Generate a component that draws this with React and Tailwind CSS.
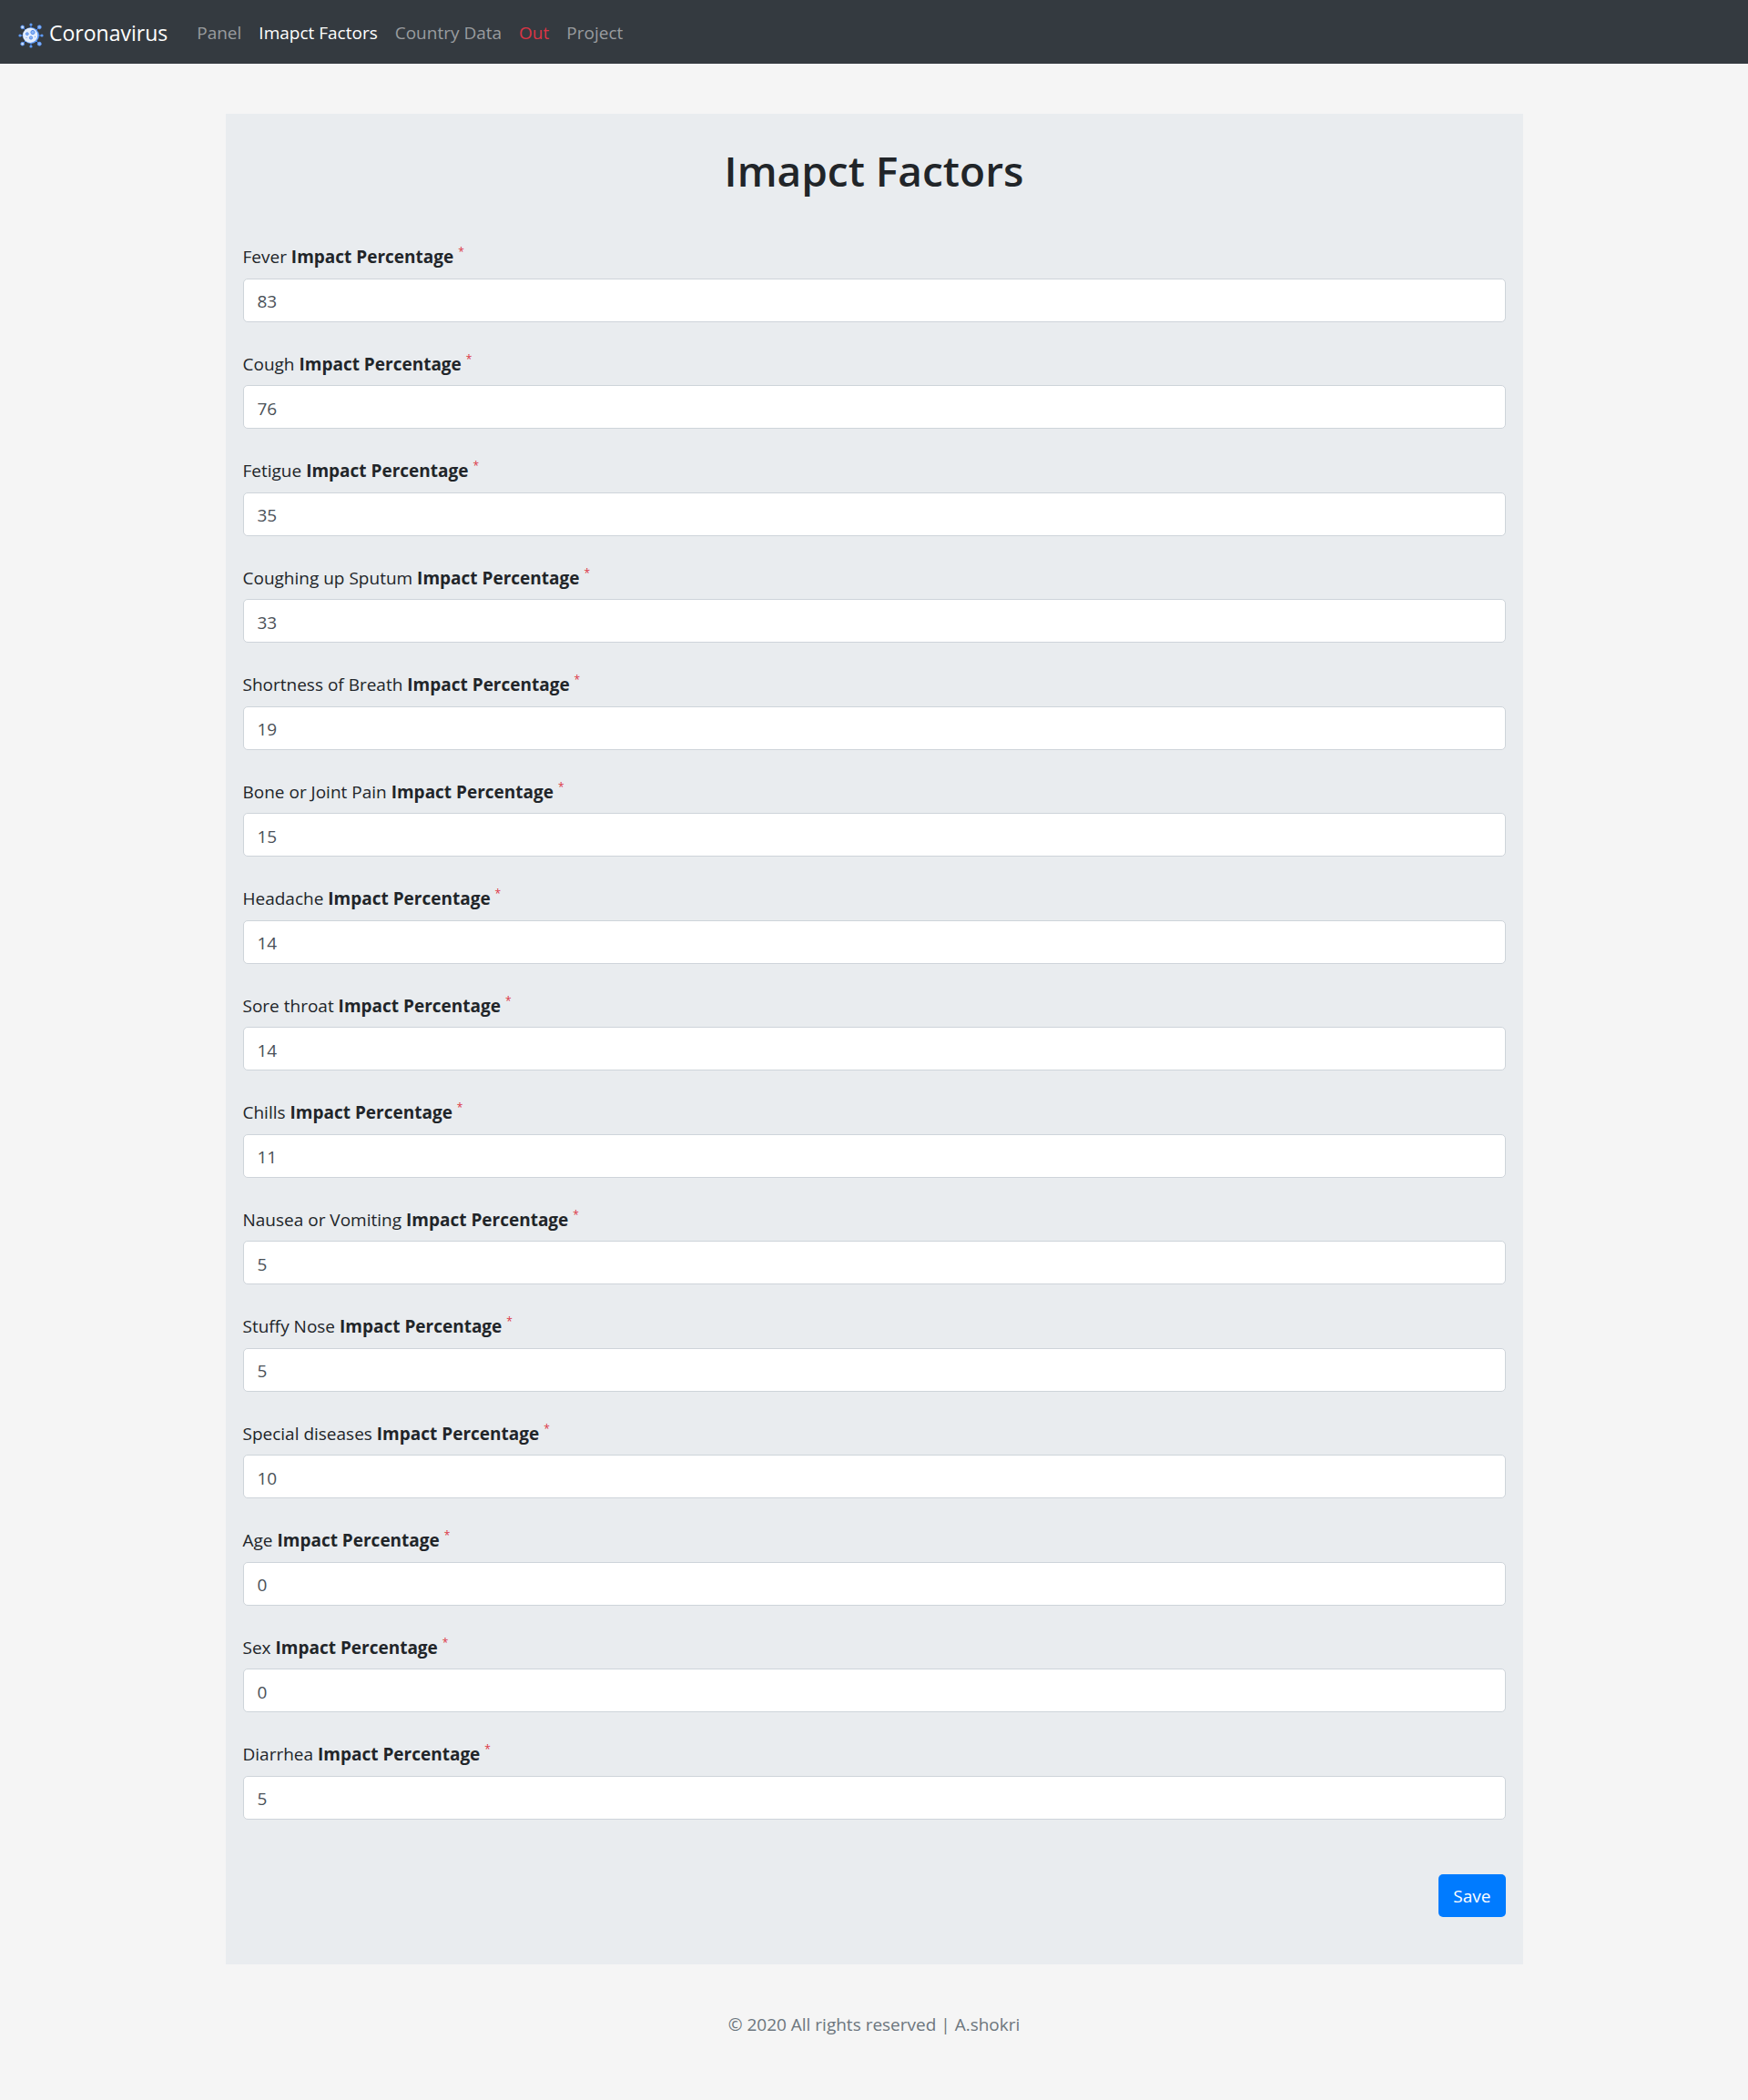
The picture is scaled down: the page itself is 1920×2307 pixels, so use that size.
import React from "react";

const FACTORS = [
  ["fever", "Fever", 83],
  ["cough", "Cough", 76],
  ["fatigue", "Fetigue", 35],
  ["sputum", "Coughing up Sputum", 33],
  ["breath", "Shortness of Breath", 19],
  ["pain", "Bone or Joint Pain", 15],
  ["headache", "Headache", 14],
  ["throat", "Sore throat", 14],
  ["chills", "Chills", 11],
  ["nausea", "Nausea or Vomiting", 5],
  ["nose", "Stuffy Nose", 5],
  ["special", "Special diseases", 10],
  ["age", "Age", 0],
  ["sex", "Sex", 0],
  ["diarrhea", "Diarrhea", 5],
];

const LINKS = [
  ["Panel", "text-[#999c9f]"],
  ["Imapct Factors", "text-white"],
  ["Country Data", "text-[#999c9f]"],
  ["Out", "text-[#dc3545]"],
  ["Project", "text-[#999c9f]"],
];

function VirusLogo() {
  return (
    <svg viewBox="0 0 28 28" className="mt-1 size-7 shrink-0" aria-hidden="true">
      <path d="M14 2v24M2 14h24M5 5l18 18M23 5L5 23" stroke="#3f7be6" strokeWidth="1" />
      <g fill="#5f9bf7">
        <circle cx="14" cy="2" r="1.6" />
        <circle cx="14" cy="26" r="1.6" />
        <circle cx="2" cy="14" r="1.6" />
        <circle cx="26" cy="14" r="1.6" />
      </g>
      <circle cx="4.7" cy="4.8" r="1.9" fill="#c3dafd" stroke="#4d8af0" strokeWidth="0.8" />
      <circle cx="4.7" cy="23.2" r="1.9" fill="#c3dafd" stroke="#4d8af0" strokeWidth="0.8" />
      <circle cx="23.3" cy="4.8" r="2.1" fill="#82b3fb" stroke="#4d8af0" strokeWidth="0.6" />
      <circle cx="23.3" cy="23.2" r="2.1" fill="#82b3fb" stroke="#4d8af0" strokeWidth="0.6" />
      <circle cx="14" cy="14" r="9" fill="#5f9bf7" />
      <circle cx="13.2" cy="13.8" r="8.1" fill="#e3edfd" />
      <g fill="#8fb7f6" stroke="#4a83e6" strokeWidth="0.9">
        <circle cx="16" cy="10.5" r="2.1" />
        <circle cx="9.8" cy="12.2" r="1.4" />
        <circle cx="14" cy="16.5" r="1.6" />
      </g>
      <circle cx="9" cy="16.3" r="0.5" fill="#4a83e6" />
      <circle cx="18.5" cy="15.3" r="0.5" fill="#4a83e6" />
    </svg>
  );
}

function FactorField({ id, name, value }) {
  return (
    <div className="mb-8">
      <label htmlFor={id} className="mb-[9px] block">
        {name} <b className="font-bold">Impact Percentage</b>{" "}
        <sup className="-top-2 text-xs leading-none text-[#dc3545]">*</sup>
      </label>
      <input
        id={id}
        type="text"
        inputMode="numeric"
        defaultValue={value}
        className="block h-12 w-full rounded-[5px] border border-[#ced4da] bg-white px-[15px] pt-[3px] text-[#495057]"
      />
    </div>
  );
}

export default function App() {
  return (
    <div className="min-h-screen bg-[#f5f5f5] font-['Open_Sans',sans-serif] text-[19px] leading-normal text-[#212529]">
      <nav className="flex h-[70px] items-center bg-[#343a40] px-5 pt-[3px]">
        <a href="#home" className="mr-8 flex items-center gap-1.5 text-[23px] text-white">
          <VirusLogo />
          Coronavirus
        </a>
        <ul className="flex gap-[19px]">
          {LINKS.map(([text, color]) => (
            <li key={text}>
              <a href="#nav" className={color}>
                {text}
              </a>
            </li>
          ))}
        </ul>
      </nav>

      <main className="mx-auto mt-[55px] max-w-[1425px] bg-[#e9ecef] px-[19px] pt-8 pb-[52px]">
        <h1 className="mb-[51px] text-center text-[46px] leading-[60px] font-semibold">Imapct Factors</h1>
        <form onSubmit={(e) => e.preventDefault()}>
          {FACTORS.map(([id, name, value]) => (
            <FactorField key={id} id={id} name={name} value={value} />
          ))}
          <div className="mt-[60px] flex justify-end">
            <button type="submit" className="h-[47px] rounded-[5px] bg-[#007bff] px-4 pt-0.5 text-white">
              Save
            </button>
          </div>
        </form>
      </main>

      <footer className="py-[52px] text-center text-[#6c757d]">© 2020 All rights reserved | A.shokri</footer>
    </div>
  );
}
